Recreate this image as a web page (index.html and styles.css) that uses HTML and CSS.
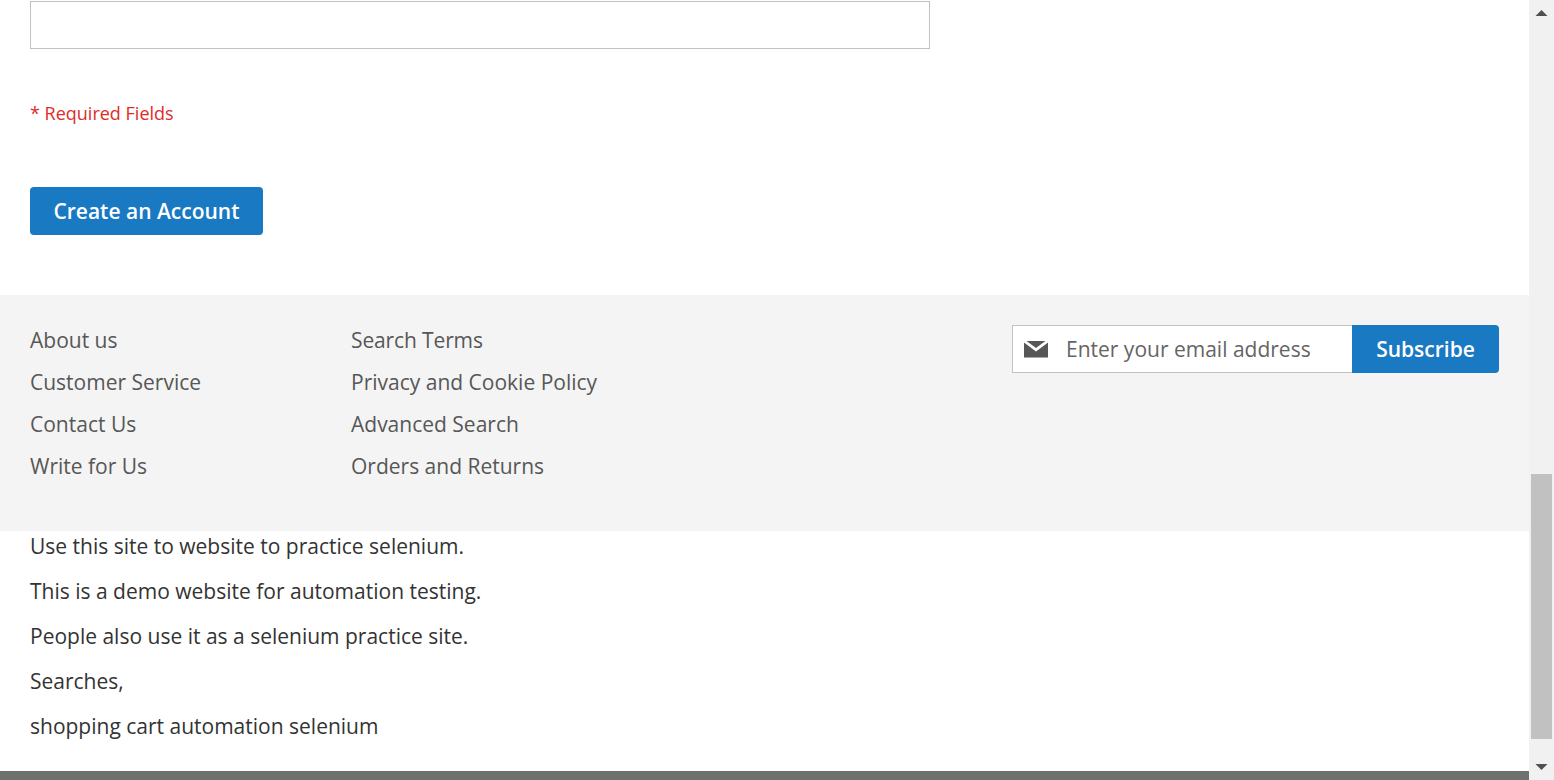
FILE: index.html
```html
<!DOCTYPE html>
<html lang="en">
<head>
<meta charset="utf-8">
<title>Create New Customer Account</title>
<link rel="stylesheet" href="styles.css">
</head>
<body>
<div class="page">
  <main class="content">
    <form class="account-form">
      <input class="field" type="password" aria-label="Confirm Password">
      <p class="required">* Required Fields</p>
      <button class="button create" type="button">Create an Account</button>
    </form>
    <footer class="footer">
      <ul class="links">
        <li>About us</li>
        <li>Customer Service</li>
        <li>Contact Us</li>
        <li>Write for Us</li>
      </ul>
      <ul class="links">
        <li class="snug">Search Terms</li>
        <li>Privacy and Cookie Policy</li>
        <li>Advanced Search</li>
        <li>Orders and Returns</li>
      </ul>
      <div class="newsletter">
        <div class="email">
          <svg class="envelope" viewBox="0 0 24 17" width="24" height="17"><path d="M2.600 0H21.400L12 7Z M0 1.500L12 10.400L24 1.500V16.500H0Z"/></svg>
          <span class="placeholder">Enter your email address</span>
        </div>
        <button class="button subscribe" type="button">Subscribe</button>
      </div>
    </footer>
    <section class="about">
      <p>Use this site to website to practice selenium.</p>
      <p>This is a demo website for automation testing.</p>
      <p>People also use it as a selenium practice site.</p>
      <p>Searches,</p>
      <p>shopping cart automation selenium</p>
    </section>
    <div class="copyright"></div>
  </main>
  <div class="scrollbar">
    <svg class="arrow" viewBox="0 0 25 25"><path d="M6.500 16L12.500 10L18.500 16Z"/></svg>
    <div class="thumb"></div>
    <svg class="arrow" viewBox="0 0 25 25"><path d="M6.500 9L12.500 15L18.500 9Z"/></svg>
  </div>
</div>
</body>
</html>
```
FILE: styles.css
```css
* { box-sizing: border-box; }
body { margin: 0; font-family: "Open Sans", "Noto Sans", sans-serif; font-size: 21px; color: #333; background: #fff; }
p, ul { margin: 0; padding: 0; list-style: none; }
.page { display: flex; width: 1554px; height: 780px; overflow: hidden; }
.content { width: 1529px; display: flex; flex-direction: column; }
.account-form { height: 295px; padding: 1px 30px 0; display: flex; flex-direction: column; align-items: flex-start; }
.field { width: 900px; height: 48px; border: 1px solid #c2c2c2; padding: 0 12px; }
.required { margin-top: 52px; line-height: 24px; font-size: 18px; color: #e02b27; }
.button { font: 600 21px/24px "Open Sans", sans-serif; color: #fff; background: #1979c3; border: 0; border-radius: 4px; height: 48px; padding: 0; white-space: nowrap; }
.create { width: 233px; margin-top: 62px; }
.footer { height: 236px; padding: 30px; background: #f4f4f4; display: flex; color: #575757; }
.links { width: 321px; }
.links li { height: 42px; line-height: 30px; white-space: nowrap; }
.links .snug { letter-spacing: -0.13px; }
.newsletter { margin-left: auto; display: flex; height: 48px; }
.email { width: 340px; background: #fff; border: 1px solid #c2c2c2; border-right: 0; display: flex; align-items: center; padding-left: 11px; }
.envelope { fill: #575757; }
.placeholder { margin-left: 18px; color: #656565; }
.subscribe { width: 147px; border-radius: 0 4px 4px 0; }
.about { height: 240px; padding-left: 30px; }
.about p { line-height: 30px; margin-bottom: 15px; }
.copyright { height: 9px; background: #6e716e; }
.scrollbar { width: 25px; height: 780px; background: #f1f1f1; display: flex; flex-direction: column; }
.arrow { width: 25px; height: 25px; fill: #505050; }
.thumb { width: 21px; height: 265px; margin: 449px 0 16px 2px; background: #c1c1c1; }
```
